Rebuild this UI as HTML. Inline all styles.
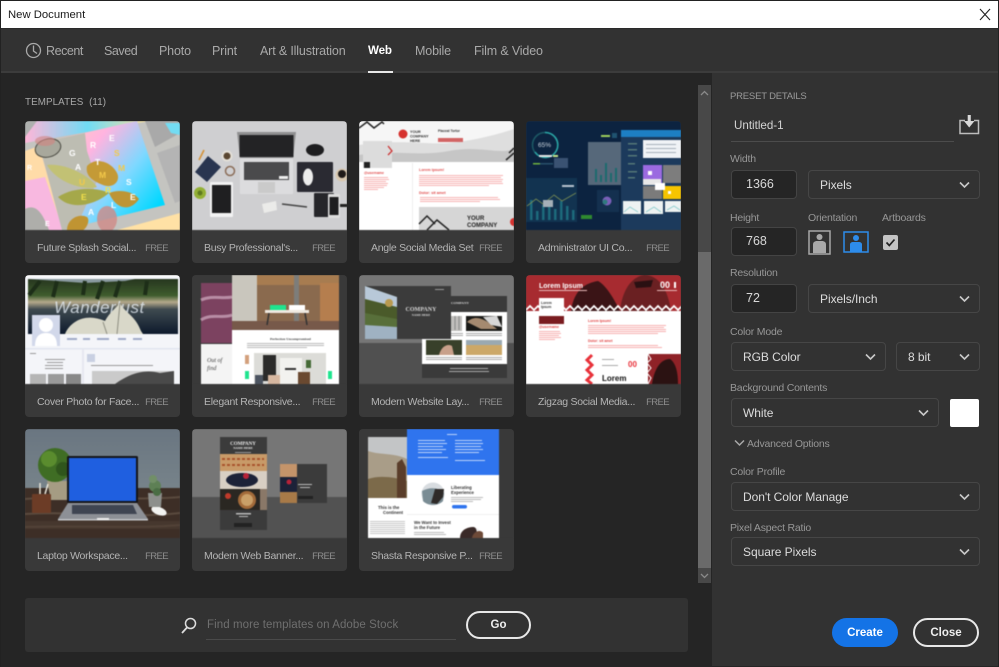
<!DOCTYPE html>
<html><head><meta charset="utf-8"><title>New Document</title>
<style>
html,body{margin:0;padding:0;width:999px;height:667px;overflow:hidden;background:#252525;font-family:"Liberation Sans",sans-serif}
.a{position:absolute;white-space:nowrap}
#titlebar{left:1px;top:1px;width:997px;height:27px;background:#fff}
#nav{left:1px;top:29px;width:997px;height:42px;background:#323232}
#div{left:1px;top:71px;width:997px;height:2px;background:#3c3c3c}
.n{top:44px;font-size:12.5px;letter-spacing:-.15px;line-height:14px;color:#a9a9a9}
.card{position:absolute;width:155px;height:142px;background:#393939;border-radius:4px;overflow:hidden}
.card svg{position:absolute;left:0;top:0;width:155px;height:109px;filter:blur(.45px)}
.t{position:absolute;left:12px;top:121px;font-size:10.5px;letter-spacing:-.28px;line-height:13px;color:#b4b4b4;white-space:nowrap}
.f{position:absolute;right:12px;top:121px;font-size:9.5px;letter-spacing:-.6px;line-height:13px;color:#8e8e8e}
.l{font-size:10.5px;letter-spacing:-.2px;line-height:12px;color:#979797;margin-top:1px}
.in{background:#252525;border:1px solid #444;border-radius:4px;box-sizing:border-box;height:29px;color:#d8d8d8;font-size:12.5px;line-height:27px}
.sel{background:#323232;border:1px solid #464646;border-radius:4px;box-sizing:border-box;height:29px;color:#dcdcdc;font-size:12px;letter-spacing:-.05px;line-height:29px;padding-left:11px}
.sel svg{position:absolute;right:9px;top:10px;width:11px;height:8px}
.btn{box-sizing:border-box;border-radius:15px;text-align:center;font-size:11.5px;font-weight:bold}
</style></head><body>
<div class="a" id="titlebar"></div>
<div class="a" style="left:8px;top:8px;font-size:11.3px;line-height:14px;color:#1a1a1a">New Document</div>
<svg class="a" style="left:979px;top:8px" width="12" height="13" viewBox="0 0 12 13"><path d="M1 1L11 12M11 1L1 12" stroke="#222" stroke-width="1.1" fill="none"/></svg>
<div class="a" id="nav"></div><div class="a" id="div"></div>
<svg class="a" style="left:25px;top:42px" width="17" height="17" viewBox="0 0 17 17"><circle cx="8.5" cy="8.5" r="7" fill="none" stroke="#a9a9a9" stroke-width="1.3"/><path d="M8.5 3.5V9L12 11.5" fill="none" stroke="#a9a9a9" stroke-width="1.3"/></svg>
<div class="a n" style="left:46px;letter-spacing:-.45px">Recent</div>
<div class="a n" style="left:104px;letter-spacing:-.45px">Saved</div>
<div class="a n" style="left:159px">Photo</div>
<div class="a n" style="left:212px">Print</div>
<div class="a n" style="left:260px">Art &amp; Illustration</div>
<div class="a n" style="left:368px;color:#fff;font-weight:bold;font-size:11.6px">Web</div>
<div class="a" style="left:368px;top:71px;width:25px;height:2px;background:#e8e8e8"></div>
<div class="a n" style="left:415px">Mobile</div>
<div class="a n" style="left:474px">Film &amp; Video</div>
<div class="a" style="left:25px;top:96px;font-size:9.8px;line-height:13px;color:#a8a8a8;letter-spacing:.1px">TEMPLATES&nbsp; (11)</div>

<!-- Card 1 -->
<div class="card" style="left:25px;top:121px">
<svg viewBox="0 0 155 109"><defs>
<linearGradient id="g1" x1="0" y1="0" x2="1" y2=".7"><stop offset="0" stop-color="#ffd9a8"/><stop offset=".4" stop-color="#ffb4e0"/><stop offset=".7" stop-color="#7fd8ff"/><stop offset="1" stop-color="#00d8ff"/></linearGradient>
<linearGradient id="g1b" x1="0" y1="0" x2="1" y2="0"><stop offset="0" stop-color="#ffb6d8"/><stop offset=".5" stop-color="#70dcf5"/><stop offset="1" stop-color="#ffdf9a"/></linearGradient>
</defs>
<rect width="155" height="109" fill="#c4c4c0"/>
<polygon points="0,0 125,0 0,22" fill="url(#g1b)"/>
<polygon points="0,30 14,25 38,109 0,109" fill="#ffdca8"/>
<polygon points="0,60 20,56 38,109 0,109" fill="#f8b8e0"/>
<polygon points="14,22 112,0 140,84 37,109" fill="url(#g1)"/>
<polygon points="14,22 60,12 62,30 72,60 50,109 37,109" fill="#bdbdb2"/>
<polygon points="120,0 155,0 155,12 130,26" fill="#a9a9a9"/>
<polygon points="132,32 155,24 155,80 150,82" fill="#b4b4b4"/>
<polygon points="140,2 155,2 155,14 146,12" fill="#73dcf3"/>
<polygon points="92,109 155,92 155,109" fill="#ffe1a5"/>
<polygon points="0,0 12,0 0,16" fill="#aeb0ae"/>
<path d="M0 88C12 82 18 94 24 109H0Z" fill="#aeaeaa"/>
<ellipse cx="23" cy="27" rx="13" ry="9" transform="rotate(-15 23 27)" fill="#a8a89c" stroke="#4a4a42"/>
<path d="M62 45C70 36 86 40 92 52C96 60 88 68 78 64C68 60 60 55 62 45Z" fill="#c49a36"/>
<path d="M22 44C40 42 64 54 72 66C60 70 32 62 22 44Z" fill="#c2c174"/>
<path d="M33 76C48 66 72 66 84 72C70 84 46 90 33 76Z" fill="#a5a84a"/>
<path d="M84 72C94 68 108 70 114 78C106 90 92 90 84 72Z" fill="#bd9536"/>
<path d="M42 109C42 98 54 92 62 96C66 100 60 109 58 109Z" fill="#c09432"/>
<ellipse cx="82" cy="98" rx="10" ry="13" fill="#d08a86" opacity=".8"/>
<ellipse cx="20" cy="20" rx="10" ry="5" fill="#d48480" opacity=".6"/>
<g font-family="Liberation Sans,sans-serif" font-size="8.5" font-weight="bold" fill="#fff">
<text x="44" y="35">G</text><text x="65" y="27">R</text><text x="84" y="20">E</text>
<text x="50" y="49">A</text><text x="70" y="44">T</text><text x="89" y="35" fill="#f3c94a">S</text>
<text x="54" y="64" fill="#f3c94a">U</text><text x="74" y="57" fill="#f3c94a">M</text><text x="93" y="50" fill="#f3c94a">M</text>
<text x="56" y="79" fill="#f3e04a">E</text><text x="80" y="72" fill="#f3e04a">R</text><text x="101" y="64">S</text>
<text x="63" y="94">A</text><text x="86" y="87">L</text><text x="105" y="79">E</text></g>
<text x="20" y="105" font-size="7" font-weight="bold" fill="#fff">E</text>
<text x="2" y="49" font-size="7" font-weight="bold" fill="#fff">R</text>
</svg>
<div class="t">Future Splash Social...</div><div class="f">FREE</div></div>

<!-- Card 2 -->
<div class="card" style="left:192px;top:121px">
<svg viewBox="0 0 155 109"><rect width="155" height="109" fill="#cfcfd1"/>
<path d="M45 11H104L101 38H48Z" fill="#8f8f90"/><rect x="47.5" y="14" width="54" height="22" fill="#232325"/>
<rect x="48" y="37" width="53" height="36" fill="#dcdcde"/><rect x="52" y="41" width="45" height="18" fill="#4a4a4c"/>
<rect x="87" y="55" width="9" height="3" fill="#eee"/><rect x="66" y="61" width="17" height="11" fill="#cacaca"/>
<polygon points="3,51 16,35 29,46 15,61" fill="#293550"/><path d="M7 39L12 29" stroke="#d49238" stroke-width="1.6"/>
<circle cx="35" cy="35" r="5.5" fill="#e4e0d8"/><circle cx="35" cy="35" r="3.5" fill="#5a4630"/>
<circle cx="38" cy="50" r="4.5" fill="none" stroke="#8b6d58" stroke-width="1.5"/>
<rect x="18" y="61" width="23" height="35" rx="1" fill="#f2f2f2"/><rect x="20" y="64" width="19" height="28" fill="#1f1f21"/>
<circle cx="8" cy="72" r="6" fill="#93b035"/><circle cx="8" cy="72" r="2.5" fill="#5f7a20"/>
<rect x="105" y="41" width="36" height="30" rx="1" fill="#2a2a32"/><ellipse cx="116" cy="56" rx="5" ry="8.5" fill="#ececec"/>
<circle cx="150" cy="54" r="6.5" fill="#d8c8b0"/><circle cx="150" cy="53" r="4" fill="#1f1a18"/>
<ellipse cx="123" cy="29" rx="9" ry="6" fill="#1e1e20"/>
<polygon points="70,83 84,80 85,89 72,92" fill="#ebebe9"/><path d="M90 83L115 86" stroke="#444" stroke-width="1.5"/>
<rect x="122" y="72" width="20" height="24" rx="1" fill="#26262a"/><rect x="136" y="73" width="12" height="24" rx="1" fill="#ddd"/><rect x="137.5" y="76" width="9" height="18" fill="#1d1d1f"/><rect x="148" y="83" width="7" height="3" fill="#222"/>
</svg>
<div class="t">Busy Professional's...</div><div class="f">FREE</div></div>

<!-- Card 3 -->
<div class="card" style="left:359px;top:121px">
<svg viewBox="0 0 155 109"><rect width="155" height="109" fill="#fff"/>
<rect width="155" height="41" fill="#dedede"/><path d="M0 0H155V8C130 16 110 20 90 22S40 18 0 24Z" fill="#f6f6f6"/>
<path d="M0 34C30 28 60 36 90 30S140 34 155 28V41H0Z" fill="#c6c6c6"/>
<path d="M0 7L8 1L15 7L23 1L25 3" stroke="#222" stroke-width="1.5" fill="none"/>
<circle cx="44" cy="13" r="4.5" fill="#d6322e"/>
<g font-family="Liberation Sans,sans-serif" font-size="3.7" font-weight="bold" fill="#333"><text x="51" y="12">YOUR</text><text x="51" y="16.5">COMPANY</text><text x="51" y="21">HERE</text><text x="79" y="11" font-size="3.3">Placeat Tortor</text></g>
<rect x="79" y="17" width="25" height="4" fill="#d26464"/>
<rect x="4" y="20" width="29" height="27" fill="#dcdcdc"/><path d="M29 25L33 30L29 34" stroke="#c33" stroke-width="1.3" fill="none"/><rect x="5" y="41" width="6" height="6" fill="#222"/>
<path d="M150 32L155 27M147 39L155 32" stroke="#222" stroke-width="1.5"/>
<text x="5" y="53" font-size="3.5" font-weight="bold" fill="#e04a4a" font-family="Liberation Sans,sans-serif">@username</text>
<g style="fill:#f7b4b4"><rect x="5" y="56" width="24" height="1"/><rect x="5" y="58" width="25" height="1"/><rect x="5" y="60" width="22" height="1"/><rect x="5" y="62" width="24" height="1"/><rect x="5" y="64" width="23" height="1"/><rect x="5" y="66" width="20" height="1"/><rect x="5" y="68" width="14" height="1"/>
<rect x="60" y="54" width="84" height="1"/><rect x="60" y="56" width="82" height="1"/><rect x="60" y="58" width="84" height="1"/><rect x="60" y="60" width="83" height="1"/><rect x="60" y="62" width="84" height="1"/><rect x="60" y="64" width="70" height="1"/>
<rect x="61" y="76" width="78" height="1"/><rect x="61" y="78" width="80" height="1"/><rect x="61" y="80" width="60" height="1"/></g>
<g font-family="Liberation Sans,sans-serif" font-size="3.8" font-weight="bold" fill="#e04a4a"><text x="60" y="50">Lorem ipsum!</text><text x="60" y="73">Dolor: sit amet</text></g>
<rect x="53" y="42" width="1" height="67" fill="#eee"/>
<rect x="60" y="86" width="95" height="23" fill="#d6d6d6"/>
<path d="M60 103L68 95L76 103M68 109L78 99L90 109" stroke="#222" stroke-width="1.5" fill="none"/>
<g font-family="Liberation Sans,sans-serif" font-size="6" font-weight="bold" fill="#222"><text x="108" y="99">YOUR</text><text x="108" y="106">COMPANY</text></g>
<circle cx="155" cy="101" r="4" fill="#d6322e"/>
</svg>
<div class="t">Angle Social Media Set</div><div class="f">FREE</div></div>

<!-- Card 4 -->
<div class="card" style="left:526px;top:121px">
<svg viewBox="0 0 155 109"><rect width="155" height="109" fill="#0c2340"/>
<circle cx="19" cy="24" r="12.5" fill="none" stroke="#1d5a66" stroke-width="1.5"/><path d="M19 11.5A12.5 12.5 0 1 1 9 31" fill="none" stroke="#2aa7a7" stroke-width="1.5"/>
<text x="12" y="26" font-size="6.5" fill="#cdd6df" font-family="Liberation Sans,sans-serif">65%</text>
<rect x="13" y="34" width="13" height="2" fill="#e4e4e4"/><rect x="27" y="34" width="5" height="2" fill="#c7e58a"/>
<rect x="7" y="42" width="20" height="1.5" fill="#28506a"/><rect x="7" y="42" width="7" height="1.5" fill="#6fb23f"/>
<rect x="28" y="37" width="14" height="10" fill="#3a5272"/>
<rect x="75" y="14" width="9" height="2" fill="#9dcf5c"/><rect x="86" y="12" width="5" height="5" fill="#1f5370"/>
<rect x="62" y="21" width="35" height="43" fill="#56687a"/>
<g fill="#1b6b6e"><rect x="69" y="48" width="2" height="13"/><rect x="74" y="54" width="2" height="7"/><rect x="79" y="42" width="2" height="19"/><rect x="84" y="52" width="2" height="9"/><rect x="89" y="47" width="2" height="14"/></g>
<rect x="95" y="9" width="60" height="100" fill="#1c3a5c"/><rect x="95" y="9" width="60" height="7" fill="#1d7fc4"/>
<g fill="#557777"><rect x="102" y="22" width="9" height="1.5"/><rect x="102" y="28" width="9" height="1.5"/><rect x="102" y="34" width="9" height="1.5"/><rect x="102" y="42" width="7" height="1.5"/><rect x="102" y="50" width="9" height="1.5"/><rect x="102" y="56" width="7" height="1.5"/></g>
<rect x="117" y="19" width="38" height="18" fill="#f0f3f6"/><g fill="#a6b0ba"><rect x="120" y="23" width="30" height="1"/><rect x="120" y="27" width="30" height="1"/><rect x="120" y="31" width="30" height="1"/></g>
<rect x="117" y="44" width="19" height="18" fill="#9b6ae0"/><rect x="122" y="50" width="4" height="4" fill="#fff"/>
<rect x="137" y="44" width="18" height="18" fill="#7d7d7d"/><rect x="117" y="65" width="19" height="13" fill="#7b7b7b"/><rect x="137" y="65" width="18" height="13" fill="#f6c400"/><rect x="142" y="70" width="3" height="3" fill="#fff"/>
<rect x="117" y="58" width="18" height="6" fill="#e8e8e8"/><rect x="129" y="62" width="10" height="7" fill="#fff"/>
<rect x="97" y="80" width="18" height="13" fill="#eef2f2"/><rect x="118" y="80" width="19" height="13" fill="#eef2f2"/><rect x="139" y="80" width="16" height="11" fill="#eef2f2"/>
<path d="M98 91L104 86L112 91M120 91L128 86L135 91M141 89L148 85L154 89" stroke="#88cccc" fill="none" stroke-width=".8"/>
<rect x="71" y="69" width="22" height="22" fill="#14304f"/><circle cx="81" cy="80" r="4.5" fill="#7b5fb8"/><circle cx="79" cy="81" r="2.5" fill="#2f7a7e"/>
<rect x="0" y="57" width="51" height="44" fill="#123350"/><rect x="36" y="64" width="12" height="2" fill="#b8c5d0"/>
<g fill="#1c6a7c"><rect x="4" y="79" width="2.5" height="20"/><rect x="10" y="90" width="2.5" height="9"/><rect x="16" y="84" width="2.5" height="15"/><rect x="22" y="83" width="2.5" height="16"/><rect x="28" y="88" width="2.5" height="11"/><rect x="34" y="80" width="2.5" height="19"/><rect x="40" y="85" width="2.5" height="14"/><rect x="46" y="89" width="2.5" height="10"/></g>
<path d="M1 85L10 78L17 83L28 74L36 80L50 72" stroke="#7a8d54" fill="none" stroke-width=".8"/>
<rect x="17" y="79" width="10" height="7" fill="#a4afb8"/><rect x="55" y="94" width="11" height="4" fill="#2f8a30"/>
</svg>
<div class="t">Administrator UI Co...</div><div class="f">FREE</div></div>

<!-- Card 5 -->
<div class="card" style="left:25px;top:275px;background:#393939">
<svg viewBox="0 0 155 109"><rect width="155" height="109" fill="#f4f5f9"/>
<defs><linearGradient id="g5" x1="0" y1="0" x2="0" y2="1"><stop offset="0" stop-color="#26361f"/><stop offset=".3" stop-color="#3f5c2d"/><stop offset=".42" stop-color="#b5a98b"/><stop offset=".55" stop-color="#3f4a50"/><stop offset="1" stop-color="#0d1a2c"/></linearGradient></defs>
<rect x="3" y="4" width="150" height="55" fill="url(#g5)"/>
<path d="M3 4L60 8L100 6L110 4H3Z" fill="#8a9aa0"/><path d="M4 20L15 6M28 22L32 6M58 20L60 6M72 24L78 6M90 22L95 6M120 20L122 6" stroke="#1d2e18" stroke-width="4"/>
<text x="29" y="38" font-family="Liberation Sans,sans-serif" font-style="italic" font-size="17" fill="#e4ecf4" opacity=".8" letter-spacing=".5">Wanderlust</text>
<path d="M40 59C46 45 62 38 80 46C84 38 92 32 95 28C100 38 110 40 116 56L118 59Z" fill="#d9d8c9"/><path d="M78 47L82 59M95 28L92 59" stroke="#8d8d80"/>
<rect x="7" y="40" width="28" height="31" fill="#d2d8ea"/><circle cx="21" cy="50" r="7" fill="#fff"/><path d="M10 71C10 62 14 58 21 58S32 62 32 71Z" fill="#fff"/>
<g fill="#a0abc8"><rect x="42" y="63" width="10" height="2"/><rect x="58" y="63" width="7" height="2"/><rect x="72" y="63" width="12" height="2"/><rect x="93" y="63" width="8" height="2"/><rect x="108" y="63" width="9" height="2"/></g>
<rect x="0" y="73" width="155" height="1.5" fill="#e2e5ef"/>
<rect x="57" y="74" width="2" height="35" fill="#e6e8f0"/>
<g fill="#999"><rect x="20" y="84" width="20" height="1"/><rect x="22" y="87" width="16" height="1"/><rect x="20" y="90" width="18" height="1"/><rect x="20" y="93" width="18" height="1"/><rect x="5" y="78" width="6" height="1"/><rect x="66" y="90" width="62" height="1"/></g>
<rect x="5" y="99" width="16" height="10" fill="#b5b5b5"/><rect x="23" y="99" width="16" height="10" fill="#9a9a9a"/><rect x="41" y="99" width="15" height="10" fill="#888"/>
<rect x="62" y="79" width="8" height="8" fill="#c9d0e2"/>
<rect x="67" y="96" width="82" height="13" fill="#cacaca"/><path d="M90 109C105 98 120 94 135 98L149 96V109Z" fill="#4a4a4a"/>
<rect x="0" y="0" width="155" height="1.5" fill="#fff"/>
</svg>
<div class="t">Cover Photo for Face...</div><div class="f">FREE</div></div>

<!-- Card 6 -->
<div class="card" style="left:192px;top:275px">
<svg viewBox="0 0 155 109"><rect width="155" height="109" fill="#393939"/>
<rect x="9" y="8" width="31" height="60" fill="#7c4260"/><path d="M9 25C20 20 30 24 40 22M9 45C20 38 30 44 40 40" stroke="#b88da5" stroke-width="3" fill="none"/>
<rect x="9" y="69" width="31" height="40" fill="#f4f4f4"/><text x="15" y="87" font-family="Liberation Serif,serif" font-style="italic" font-size="6" fill="#444">Out of</text><text x="15" y="95" font-family="Liberation Serif,serif" font-style="italic" font-size="6" fill="#444">find</text>
<rect x="40" y="0" width="107" height="109" fill="#fff"/>
<rect x="40" y="0" width="107" height="55" fill="#8a6a4e"/><rect x="40" y="0" width="25" height="46" fill="#c9c6bd"/><rect x="65" y="0" width="82" height="10" fill="#a77c50"/><rect x="128" y="8" width="19" height="40" fill="#b57e4e"/>
<rect x="102" y="0" width="5" height="48" fill="#7d7d7a"/><rect x="40" y="46" width="107" height="9" fill="#77594a"/>
<rect x="73" y="35" width="44" height="3" fill="#efe9e0"/><path d="M77 38L75 50M113 38L115 50" stroke="#333" stroke-width="1.5"/>
<rect x="78" y="30" width="16" height="5" fill="#1fe48e"/><rect x="97" y="30" width="16" height="5" fill="#fff"/>
<text x="78" y="65" font-family="Liberation Serif,serif" font-size="3.5" font-weight="bold" fill="#444">Perfection Uncompromised</text>
<g fill="#bbb"><rect x="55" y="68" width="77" height="1"/><rect x="55" y="70" width="77" height="1"/><rect x="55" y="72" width="60" height="1"/></g>
<rect x="62" y="78" width="72" height="31" fill="#dcdcd8"/><rect x="71" y="80" width="13" height="26" fill="#2b2b2a"/><rect x="88" y="83" width="22" height="26" fill="#f2f2ef"/><rect x="93" y="93" width="11" height="2" fill="#333"/><rect x="106" y="97" width="12" height="12" fill="#6a4930"/><rect x="76" y="100" width="12" height="9" fill="#d6b7a0"/><rect x="114" y="85" width="5" height="8" fill="#456a36"/>
<rect x="53" y="96" width="4" height="8" fill="#1fe48e"/><rect x="136" y="96" width="4" height="8" fill="#1fe48e"/><rect x="53" y="80" width="4" height="9" fill="#d3a07c"/><rect x="63" y="100" width="8" height="9" fill="#4c5460"/>
</svg>
<div class="t">Elegant Responsive...</div><div class="f">FREE</div></div>

<!-- Card 7 -->
<div class="card" style="left:359px;top:275px">
<svg viewBox="0 0 155 109"><rect width="155" height="68" fill="#767676"/><rect y="68" width="155" height="41" fill="#505050"/>
<rect x="63" y="21" width="85" height="82" fill="#3a3a3a"/><rect x="63" y="37" width="85" height="52" fill="#fff"/>
<rect x="6" y="11" width="86" height="53" fill="#3b3b3b"/>
<polygon points="6,11 38,22 38,64 6,64" fill="#4a5a2a"/><polygon points="6,11 38,22 38,32 6,24" fill="#b8c8d8"/><circle cx="30" cy="28" r="4" fill="#b89a50"/><polygon points="6,38 38,44 38,52 6,50" fill="#586f3a"/><polygon points="6,50 38,52 38,64 6,64" fill="#9fb2c2"/>
<g font-family="Liberation Serif,serif" fill="#d8d8d8" text-anchor="middle" font-weight="bold"><text x="62" y="36" font-size="6">COMPANY</text><text x="62" y="41" font-size="3">NAME HERE</text><text x="101" y="29" font-size="3.5">COMPANY</text></g>
<rect x="76" y="14" width="9" height="1" fill="#999"/>
<rect x="92" y="41" width="11" height="15" fill="#c0bfbc"/><path d="M96 41V55M100 41V55" stroke="#888"/>
<rect x="107" y="41" width="36" height="15" fill="#1a1a18"/><path d="M108 47C118 38 128 46 138 54L122 54Z" fill="#a58a70"/><polygon points="124,42 138,41 143,52 132,50" fill="#d7d7d7"/>
<g fill="#aaa"><rect x="92" y="58" width="12" height="1"/><rect x="107" y="58" width="36" height="1"/><rect x="107" y="60" width="36" height="1"/><rect x="92" y="60" width="12" height="1"/></g>
<rect x="67" y="65" width="36" height="15" fill="#38402a"/><path d="M80 80C82 72 88 68 93 71L95 80Z" fill="#c8a08a"/>
<rect x="107" y="65" width="36" height="15" fill="#cca868"/><rect x="107" y="65" width="36" height="5" fill="#9aa9b2"/>
<g fill="#aaa"><rect x="67" y="82" width="36" height="1"/><rect x="67" y="84" width="36" height="1"/><rect x="107" y="82" width="36" height="1"/><rect x="107" y="84" width="36" height="1"/></g>
<rect x="91" y="93" width="38" height="1" fill="#aaa"/><rect x="90" y="96" width="40" height="1" fill="#aaa"/>
</svg>
<div class="t">Modern Website Lay...</div><div class="f">FREE</div></div>

<!-- Card 8 -->
<div class="card" style="left:526px;top:275px">
<svg viewBox="0 0 155 109"><rect width="155" height="109" fill="#fff"/>
<rect width="155" height="36" fill="#a72b30"/>
<path d="M45 36C48 14 60 8 72 6C80 10 88 24 94 36Z" fill="#3a1416"/><path d="M94 36C96 16 105 2 118 0C134 0 142 16 145 36Z" fill="#6a2022"/>
<path d="M108 7L127 5L125 12L110 13Z" fill="#2a1012"/>
<text x="13" y="13" font-size="7" font-weight="bold" fill="#fff" font-family="Liberation Sans,sans-serif">Lorem Ipsum</text>
<rect x="13" y="15" width="48" height="1" fill="#e8b8b8"/>
<text x="134" y="13" font-size="9" font-weight="bold" fill="#fff" font-family="Liberation Sans,sans-serif">00</text><rect x="148" y="7" width="2" height="6" fill="#fff"/><rect x="131" y="15" width="20" height="1" fill="#e8b8b8"/>
<path d="M0 35L4 31L8 35L12 31L16 35L20 31L24 35L28 31L32 35L36 31L40 35L44 31L48 35L52 31L56 35L60 31L64 35L68 31L72 35L76 31L80 35L84 31L88 35L92 31L96 35L100 31L104 35L108 31L112 35L116 31L120 35L124 31L128 35L132 31L136 35L140 31L144 35L148 31L152 35L156 31" stroke="#fff" stroke-width="1.8" fill="none"/>
<rect x="13" y="23" width="25" height="18" fill="#fff"/><rect x="13" y="41" width="25" height="8" fill="#7a1c20"/>
<g font-size="3.5" font-weight="bold" fill="#333" font-family="Liberation Sans,sans-serif"><text x="15" y="29">Lorem</text><text x="15" y="33">Ipsum</text></g>
<g font-size="3.5" font-weight="bold" fill="#e04040" font-family="Liberation Sans,sans-serif"><text x="13" y="53">@username</text><text x="62" y="47">Lorem Ipsum!</text><text x="62" y="67">Dolor: sit amet</text></g>
<g style="fill:#f7b0b0"><rect x="13" y="56" width="21" height="1"/><rect x="13" y="58" width="22" height="1"/><rect x="13" y="60" width="20" height="1"/><rect x="13" y="62" width="22" height="1"/><rect x="13" y="64" width="16" height="1"/><rect x="62" y="50" width="78" height="1"/><rect x="62" y="52" width="76" height="1"/><rect x="62" y="54" width="78" height="1"/><rect x="62" y="56" width="78" height="1"/><rect x="62" y="58" width="70" height="1"/><rect x="62" y="70" width="70" height="1"/><rect x="62" y="72" width="74" height="1"/></g>
<path d="M66 80L61 85L66 90L61 95L66 100L61 105L66 109" stroke="#e8323a" stroke-width="3" fill="none"/>
<rect x="122" y="79" width="33" height="30" fill="#8f2227"/><path d="M126 109C128 95 134 84 144 84C150 88 152 98 152 109Z" fill="#2b1212"/>
<path d="M122 79L125 84L121 88L125 93L121 98L125 103L122 109" stroke="#fff" stroke-width="1" fill="none"/>
<text x="102" y="92" font-size="8" font-weight="bold" fill="#e8323a" font-family="Liberation Sans,sans-serif">00</text>
<rect x="76" y="84" width="12" height="1" fill="#aaa"/><rect x="76" y="90" width="16" height="1" fill="#aaa"/>
<text x="76" y="106" font-size="8" font-weight="bold" fill="#111" font-family="Liberation Sans,sans-serif">Lorem</text>
</svg>
<div class="t">Zigzag Social Media...</div><div class="f">FREE</div></div>

<!-- Card 9 -->
<div class="card" style="left:25px;top:429px">
<svg viewBox="0 0 155 109"><defs><linearGradient id="g9" x1="0" y1="0" x2="0" y2="1"><stop offset="0" stop-color="#6a7681"/><stop offset="1" stop-color="#77838a"/></linearGradient></defs>
<rect width="155" height="60" fill="url(#g9)"/><rect y="59" width="155" height="50" fill="#3d2e26"/>
<path d="M0 70C40 66 110 72 155 68M0 85C60 82 100 90 155 84M0 98C50 96 110 100 155 96" stroke="#5a4a3e" stroke-width="2" fill="none"/><rect y="92" width="155" height="8" fill="#4d3e34" opacity=".6"/>
<path d="M22 52H44L42 71H26Z" fill="#a59c83"/>
<circle cx="30" cy="36" r="17" fill="#3f6d24"/><circle cx="24" cy="30" r="8" fill="#5a8c2e"/><circle cx="38" cy="40" r="7" fill="#2f551c"/>
<rect x="7" y="65" width="19" height="19" rx="1" fill="#6c3c26"/><path d="M15 65V54M20 65L23 55" stroke="#e8e4d8" stroke-width="1.5"/>
<rect x="42" y="27" width="71" height="47" rx="1.5" fill="#141418"/><rect x="44" y="29" width="67" height="43" fill="#1f5fe0"/>
<polygon points="33,90 43,74 112,74 123,90" fill="#8d9096"/><polygon points="47,76 108,76 112,85 47,85" fill="#3f4552"/><rect x="33" y="90" width="90" height="1.5" fill="#c3c6c9"/><rect x="72" y="89" width="12" height="2" fill="#eee"/>
<ellipse cx="134" cy="82" rx="8" ry="4" transform="rotate(20 134 82)" fill="#f2f2f0"/>
<path d="M123 64H137L136 78H124Z" fill="#8d8f8c"/><circle cx="130" cy="57" r="6" fill="#5e8055"/><circle cx="128" cy="50" r="4" fill="#718f67"/><circle cx="132" cy="63" r="4" fill="#4a6d44"/>
</svg>
<div class="t">Laptop Workspace...</div><div class="f">FREE</div></div>

<!-- Card 10 -->
<div class="card" style="left:192px;top:429px">
<svg viewBox="0 0 155 109"><rect width="155" height="68" fill="#767676"/><rect y="68" width="155" height="41" fill="#525252"/>
<rect x="28" y="8" width="47" height="93" fill="#3b3b3b"/>
<rect x="28" y="25" width="47" height="17" fill="#c89a68"/><path d="M30 30H72M30 36H72" stroke="#a8522c" stroke-width="2" stroke-dasharray="3 2"/>
<rect x="28" y="42" width="47" height="18" fill="#d8cfc4"/><ellipse cx="50" cy="51" rx="16" ry="7" fill="#1c2238"/><circle cx="54" cy="47" r="3" fill="#b82238"/>
<rect x="28" y="60" width="47" height="21" fill="#2a2722"/><circle cx="55" cy="71" r="9" fill="#a36b3a"/><circle cx="55" cy="71" r="6" fill="#caa068"/><circle cx="36" cy="67" r="3" fill="#c03a2a"/><rect x="68" y="60" width="7" height="21" fill="#8a7868"/>
<g font-family="Liberation Serif,serif" font-weight="bold" fill="#eee" text-anchor="middle"><text x="51" y="16" font-size="5">COMPANY</text><text x="51" y="20" font-size="3.2">NAME HERE</text><text x="112" y="45" font-size="3.5">COMPANY</text><text x="112" y="48.5" font-size="2.5">NAME HERE</text></g>
<rect x="43" y="23" width="16" height="1" fill="#999"/><rect x="44" y="84" width="15" height="1.5" fill="#bbb"/><rect x="47" y="87" width="9" height="1" fill="#bbb"/><rect x="42" y="94" width="18" height="4" fill="#222"/>
<rect x="88" y="35" width="47" height="39" fill="#3b3b3b"/><rect x="88" y="35" width="17" height="13" fill="#c4946a"/><rect x="88" y="48" width="17" height="15" fill="#1c2238"/><circle cx="97" cy="53" r="2.5" fill="#b82238"/><rect x="88" y="63" width="17" height="11" fill="#a87a48"/><rect x="106" y="55" width="14" height="1" fill="#bbb"/><rect x="108" y="58" width="10" height="1" fill="#bbb"/><rect x="106" y="67" width="15" height="3" fill="#222"/>
</svg>
<div class="t">Modern Web Banner...</div><div class="f">FREE</div></div>

<!-- Card 11 -->
<div class="card" style="left:359px;top:429px">
<svg viewBox="0 0 155 109"><rect width="155" height="109" fill="#393939"/>
<rect x="9" y="8" width="39" height="61" fill="#a99d88"/><path d="M9 8H48V30C36 24 20 26 9 22Z" fill="#c3c5c6"/><path d="M9 50C20 46 36 48 48 52V69H9Z" fill="#7c6a4a"/><path d="M38 58V34L43 30L47 38V69H38Z" fill="#5a3d2a"/>
<rect x="9" y="69" width="39" height="40" fill="#fff"/>
<g font-family="Liberation Sans,sans-serif" font-size="4.3" font-weight="bold" fill="#333"><text x="19" y="80">This is the</text><text x="24" y="85">Continent</text></g>
<g fill="#c7c7c7"><rect x="11" y="92" width="35" height="1"/><rect x="11" y="94" width="35" height="1"/><rect x="11" y="96" width="35" height="1"/><rect x="11" y="98" width="35" height="1"/><rect x="11" y="100" width="35" height="1"/><rect x="11" y="102" width="35" height="1"/><rect x="11" y="104" width="35" height="1"/></g>
<rect x="48" y="0" width="92" height="109" fill="#fff"/><rect x="48" y="0" width="92" height="46" fill="#2f74ee"/>
<g style="fill:#bcd3fa"><rect x="59" y="11" width="27" height="1"/><rect x="59" y="14" width="29" height="1"/><rect x="59" y="17" width="25" height="1"/><rect x="59" y="20" width="28" height="1"/><rect x="59" y="23" width="24" height="1"/><rect x="96" y="11" width="27" height="1"/><rect x="96" y="14" width="28" height="1"/><rect x="96" y="17" width="26" height="1"/><rect x="96" y="20" width="28" height="1"/><rect x="96" y="23" width="24" height="1"/><rect x="59" y="28" width="30" height="1"/><rect x="96" y="31" width="30" height="1"/><rect x="88" y="5" width="10" height="1"/></g>
<circle cx="74" cy="65" r="11.5" fill="#d8dce0"/><path d="M63 62C70 58 80 58 85 64L84 72C80 77 68 77 64 72Z" fill="#7a8c94"/><path d="M72 74L76 60L85 60L84 68L78 75Z" fill="#2e2a28"/>
<g font-family="Liberation Sans,sans-serif" font-size="4.3" font-weight="bold" fill="#333"><text x="92" y="60">Liberating</text><text x="92" y="65">Experience</text><text x="55" y="95">We Want to Invest</text><text x="55" y="100">in the Future</text></g>
<g fill="#bbb"><rect x="92" y="68" width="32" height="1"/><rect x="92" y="70" width="30" height="1"/><rect x="92" y="72" width="22" height="1"/><rect x="55" y="103" width="30" height="1"/><rect x="55" y="105" width="32" height="1"/></g>
<rect x="93" y="76" width="15" height="3.5" rx="1.7" fill="#2f74ee"/><rect x="48" y="85" width="92" height="1" fill="#f0f0f0"/>
<circle cx="113" cy="109" r="11" fill="#f0f0f0"/><path d="M101 109C101 100 110 98 114 98S118 103 118 109Z" fill="#3a2a28"/><path d="M113 109C114 102 122 100 124 104L124 109Z" fill="#6e4a38"/>
</svg>
<div class="t">Shasta Responsive P...</div><div class="f">FREE</div></div>

<!-- Scrollbar -->
<div class="a" style="left:698px;top:85px;width:13px;height:498px;background:#484848"></div>
<div class="a" style="left:698px;top:252px;width:13px;height:316px;background:#6a6a6a"></div>
<svg class="a" style="left:700px;top:90px" width="9" height="6" viewBox="0 0 9 6"><path d="M1 5L4.5 1.5L8 5" fill="none" stroke="#8a8a8a" stroke-width="1.3"/></svg>
<svg class="a" style="left:700px;top:573px" width="9" height="6" viewBox="0 0 9 6"><path d="M1 1L4.5 4.5L8 1" fill="none" stroke="#8a8a8a" stroke-width="1.3"/></svg>

<!-- Search bar -->
<div class="a" style="left:25px;top:598px;width:663px;height:54px;background:#323232;border-radius:3px"></div>
<svg class="a" style="left:180px;top:616px" width="18" height="19" viewBox="0 0 18 19"><circle cx="10.5" cy="7.5" r="5" fill="none" stroke="#ddd" stroke-width="1.5"/><path d="M7 11.5L2 17" stroke="#ddd" stroke-width="1.8"/></svg>
<div class="a" style="left:207px;top:619px;font-size:11.5px;line-height:13px;color:#6f6f6f;letter-spacing:.08px">Find more templates on Adobe Stock</div>
<div class="a" style="left:206px;top:639px;width:250px;height:1px;background:#4a4a4a"></div>
<div class="a btn" style="left:466px;top:611px;width:65px;height:28px;border:2px solid #e8e8e8;color:#eee;line-height:25px">Go</div>

<!-- Right panel -->
<div class="a" style="left:712px;top:73px;width:286px;height:593px;background:#323232"></div>
<div class="a l" style="left:730px;top:90px;color:#9a9a9a;font-size:9.5px">PRESET DETAILS</div>
<div class="a" style="left:734px;top:119px;font-size:11.6px;line-height:14px;color:#d4d4d4">Untitled-1</div>
<div class="a" style="left:731px;top:141px;width:223px;height:1px;background:#4c4c4c"></div>
<svg class="a" style="left:959px;top:115px" width="21" height="20" viewBox="0 0 21 20"><path d="M6 5.5H1V18.5H19.5V5.5H15" fill="none" stroke="#bdbdbd" stroke-width="1.5"/><polygon points="8.7,0 11.8,0 11.8,6 15.5,6 10.2,12.5 5,6 8.7,6" fill="#d8d8d8"/></svg>

<div class="a l" style="left:730px;top:152px">Width</div>
<div class="a in" style="left:731px;top:170px;width:66px;padding-left:14px">1366</div>
<div class="a sel" style="left:808px;top:170px;width:172px">Pixels<svg viewBox="0 0 11 8"><path d="M1 1.5L5.5 6L10 1.5" fill="none" stroke="#c8c8c8" stroke-width="1.6"/></svg></div>

<div class="a l" style="left:730px;top:211px">Height</div>
<div class="a l" style="left:808px;top:211px">Orientation</div>
<div class="a l" style="left:882px;top:211px">Artboards</div>
<div class="a in" style="left:731px;top:227px;width:66px;padding-left:14px">768</div>
<svg class="a" style="left:808px;top:230px" width="23" height="25" viewBox="0 0 23 25"><rect x="1" y="1" width="21" height="23" fill="none" stroke="#a8a8a8" stroke-width="1.5"/><circle cx="11.5" cy="7" r="3" fill="#a8a8a8"/><path d="M5 23V14.5C5 12 7 11 9 11H14C16 11 18 12 18 14.5V23Z" fill="#a8a8a8"/></svg>
<svg class="a" style="left:843px;top:231px" width="26" height="22" viewBox="0 0 26 22"><rect x="1" y="1" width="24" height="20" fill="none" stroke="#2d8ceb" stroke-width="1.5"/><circle cx="13" cy="7" r="3" fill="#2d8ceb"/><path d="M7 21V13.5C7 11.5 9 11 10 11H16C17 11 19 11.5 19 13.5V21Z" fill="#2d8ceb"/></svg>
<svg class="a" style="left:883px;top:235px" width="15" height="15" viewBox="0 0 15 15"><rect width="15" height="15" rx="2" fill="#c4c4c4"/><path d="M3.5 7.5L6.3 10.5L11.5 4.5" fill="none" stroke="#222" stroke-width="1.7"/></svg>

<div class="a l" style="left:730px;top:266px">Resolution</div>
<div class="a in" style="left:731px;top:284px;width:66px;padding-left:14px">72</div>
<div class="a sel" style="left:808px;top:284px;width:172px">Pixels/Inch<svg viewBox="0 0 11 8"><path d="M1 1.5L5.5 6L10 1.5" fill="none" stroke="#c8c8c8" stroke-width="1.6"/></svg></div>

<div class="a l" style="left:730px;top:325px">Color Mode</div>
<div class="a sel" style="left:731px;top:342px;width:155px">RGB Color<svg viewBox="0 0 11 8"><path d="M1 1.5L5.5 6L10 1.5" fill="none" stroke="#c8c8c8" stroke-width="1.6"/></svg></div>
<div class="a sel" style="left:896px;top:342px;width:84px">8 bit<svg viewBox="0 0 11 8"><path d="M1 1.5L5.5 6L10 1.5" fill="none" stroke="#c8c8c8" stroke-width="1.6"/></svg></div>

<div class="a l" style="left:730px;top:381px">Background Contents</div>
<div class="a sel" style="left:731px;top:398px;width:208px">White<svg viewBox="0 0 11 8"><path d="M1 1.5L5.5 6L10 1.5" fill="none" stroke="#c8c8c8" stroke-width="1.6"/></svg></div>
<div class="a" style="left:950px;top:399px;width:29px;height:28px;background:#fff;border-radius:2px"></div>

<svg class="a" style="left:734px;top:439px" width="11" height="8" viewBox="0 0 11 8"><path d="M1 1.5L5.5 6L10 1.5" fill="none" stroke="#a8a8a8" stroke-width="1.5"/></svg>
<div class="a l" style="left:747px;top:437px">Advanced Options</div>

<div class="a l" style="left:730px;top:465px">Color Profile</div>
<div class="a sel" style="left:731px;top:482px;width:249px">Don't Color Manage<svg viewBox="0 0 11 8"><path d="M1 1.5L5.5 6L10 1.5" fill="none" stroke="#c8c8c8" stroke-width="1.6"/></svg></div>

<div class="a l" style="left:730px;top:521px">Pixel Aspect Ratio</div>
<div class="a sel" style="left:731px;top:537px;width:249px">Square Pixels<svg viewBox="0 0 11 8"><path d="M1 1.5L5.5 6L10 1.5" fill="none" stroke="#c8c8c8" stroke-width="1.6"/></svg></div>

<div class="a btn" style="left:832px;top:618px;width:66px;height:29px;background:#1473e6;color:#fff;line-height:30px">Create</div>
<div class="a btn" style="left:913px;top:618px;width:66px;height:29px;border:2px solid #e8e8e8;color:#eee;line-height:26px">Close</div>

<!-- window border -->
<div class="a" style="left:0;top:0;width:999px;height:1px;background:#222"></div>
<div class="a" style="left:0;top:28px;width:999px;height:1px;background:#2a2a2a"></div>
<div class="a" style="left:0;top:0;width:1px;height:667px;background:#222"></div>
<div class="a" style="left:998px;top:0;width:1px;height:667px;background:#222"></div>
</body></html>
